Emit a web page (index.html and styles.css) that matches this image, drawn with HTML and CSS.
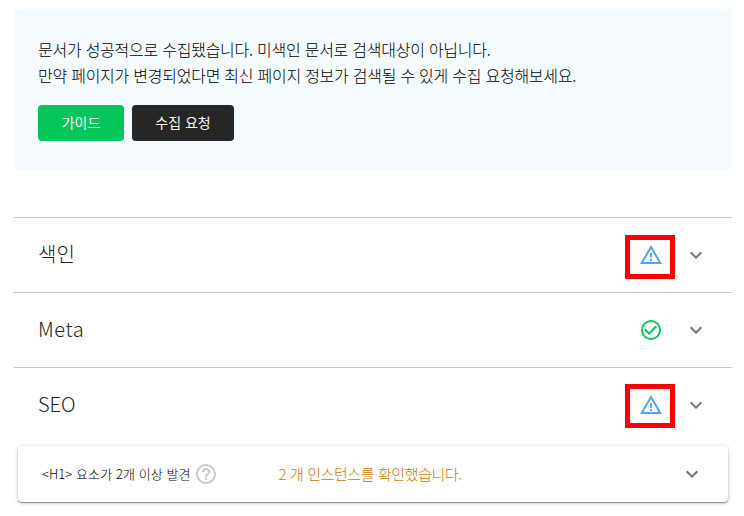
FILE: index.html
```html
<!DOCTYPE html>
<html lang="ko">
<head>
<meta charset="utf-8">
<title>SEO</title>
<link rel="stylesheet" href="styles.css">
</head>
<body>
<svg class="defs" aria-hidden="true">
  <symbol id="warn" viewBox="0 0 24 24"><path d="M12 5.990 19.530 19H4.470L12 5.990M12 2 1 21h22L12 2zm1 14h-2v2h2v-2zm0-6h-2v4.500h2V10z"/></symbol>
  <symbol id="check" viewBox="0 0 24 24"><path d="M16.590 7.580 10 14.170l-3.590-3.580L5 12l5 5 8-8-1.410-1.420zM12 2a10 10 0 1 0 0 20 10 10 0 0 0 0-20zm0 18a8 8 0 1 1 0-16 8 8 0 0 1 0 16z"/></symbol>
  <symbol id="chevron" viewBox="0 0 24 24"><path d="M7.410 8.590 12 13.170l4.590-4.580L18 10l-6 6-6-6 1.410-1.410z"/></symbol>
  <symbol id="help" viewBox="0 0 24 24"><path d="M11 18h2v-2h-2v2zm1-16a10 10 0 1 0 0 20 10 10 0 0 0 0-20zm0 18a8 8 0 1 1 0-16 8 8 0 0 1 0 16zm0-14a4 4 0 0 0-4 4h2a2 2 0 1 1 4 0c0 2-3 1.750-3 5h2c0-2.250 3-2.500 3-5a4 4 0 0 0-4-4z"/></symbol>
</svg>
<main>
  <section class="notice">
    <p><span class="line">문서가 성공적으로 수집됐습니다. 미색인 문서로 검색대상이 아닙니다.</span><span class="line">만약 페이지가 변경되었다면 최신 페이지 정보가 검색될 수 있게 수집 요청해보세요.</span></p>
    <div class="actions"><button class="guide">가이드</button><button class="request">수집 요청</button></div>
  </section>
  <section class="list">
    <div class="row"><h2>색인</h2><span class="status marked"><svg class="icon warn"><use href="#warn"/></svg></span><svg class="icon chevron"><use href="#chevron"/></svg></div>
    <div class="row"><h2 class="meta">Meta</h2><span class="status"><svg class="icon check"><use href="#check"/></svg></span><svg class="icon chevron"><use href="#chevron"/></svg></div>
    <div class="row last"><h2>SEO</h2><span class="status marked"><svg class="icon warn"><use href="#warn"/></svg></span><svg class="icon chevron"><use href="#chevron"/></svg></div>
  </section>
  <section class="card">
    <div class="issue"><span class="issue-name">&lt;H1&gt; 요소가 2개 이상 발견</span><svg class="icon help"><use href="#help"/></svg></div>
    <span class="result">2 개 인스턴스를 확인했습니다.</span>
    <svg class="icon chevron"><use href="#chevron"/></svg>
  </section>
</main>
</body>
</html>
```
FILE: styles.css
```css
* { box-sizing: border-box; }
body { margin: 0; min-height: 516px; background: #fff; color: #000; font-family: "Noto Sans CJK KR", sans-serif; }
.defs { display: none; }
main { padding: 9px 12px 0 14px; }
.notice { height: 160px; padding: 27px 24px; background: #f4fafd; border-radius: 3px; }
.notice p { margin: 0 0 17px; font-size: 16px; font-weight: 300; line-height: 26px; letter-spacing: -.25px; white-space: nowrap; }
.line { display: block; }
.actions { display: flex; gap: 8px; }
button { height: 36px; padding: 0 0 3px; border: 0; border-radius: 4px; color: #fff; font: 400 14px "Noto Sans CJK KR", sans-serif; }
.guide { width: 86px; background: #03c75a; }
.request { width: 102px; background: #262626; }
.list { margin-top: 48px; }
.row { display: flex; align-items: center; height: 75px; padding: 0 24.500px 1px 24px; border-top: 1px solid #c9c9c9; }
h2 { flex: 1; margin: -2px 0 0; font-size: 20px; font-weight: 300; color: #222; }
.meta { letter-spacing: .6px; }
.status { display: flex; align-items: center; justify-content: center; width: 50px; height: 44px; margin-right: 8.500px; }
.marked { border: 5px solid #fb0007; margin-top: 4px; }
.row.last .marked { margin-top: 3px; }
.icon { display: block; flex: none; width: 24px; height: 24px; }
.warn { fill: #4fa3f5; margin: -3px 0 0 2px; }
.check { fill: #03c75a; margin-left: 2px; }
.chevron { fill: #737373; }
.card { display: flex; align-items: center; height: 56px; margin: 4px 4px 0; padding: 0 24.500px 0 24px; border-radius: 4px; background: #fff; box-shadow: 0 1px 1px rgba(0,0,0,.36), 0 1px 4px rgba(0,0,0,.22); }
.issue { display: flex; align-items: center; width: 236.500px; gap: 4px; }
.issue-name { margin-top: -2px; font-size: 13px; font-weight: 300; letter-spacing: .07px; white-space: nowrap; }
.help { fill: #c7c7c7; }
.result { flex: 1; color: #c47c00; font-size: 15px; font-weight: 300; letter-spacing: -.4px; margin-top: -2px; }
```
